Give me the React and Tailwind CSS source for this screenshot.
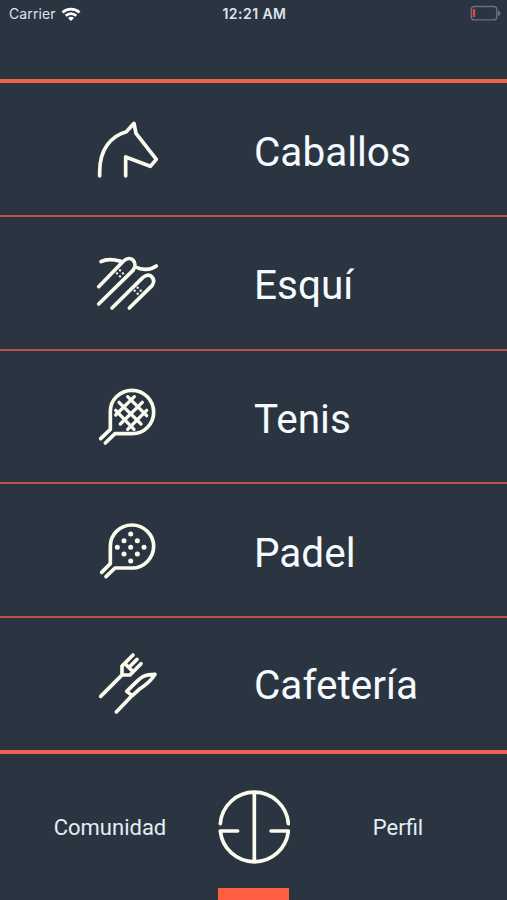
const activities = [
    {
        name: 'Caballos',
        viewBox: '0 -3 270 240',
        icon: (
            <path
                strokeWidth="11"
                d="M44 198V184C44 118 78 78 124 65L147 40L153 70L214 148L196 169L122 141V198"
            />
        ),
    },
    {
        name: 'Esquí',
        viewBox: '0 -6 270 240',
        icon: (
            <>
                <path
                    strokeWidth="11"
                    d="M48 50C70 38 96 46 108 49M152 66C170 76 195 76 214 63M41 125L115 49C137 27 161 52 144 76L41 177M81 189L174 97C196 80 214 102 201 122L133 189"
                />
                <path
                    strokeWidth="7"
                    d="M96 85h.1M105 76h.1M114 85h.1M105 94h.1M149 137h.1M158 128h.1M167 137h.1M158 146h.1"
                />
            </>
        ),
    },
    {
        name: 'Tenis',
        viewBox: '0 -6 270 240',
        icon: (
            <>
                <path
                    strokeWidth="11"
                    d="M47 182L76 154V100C76 65 105 37 141 37S206 67 206 103S177 167 142 167H90L61 195"
                />
                <path
                    strokeWidth="10"
                    d="M128 56L185 113M102 73L168 138M92 97L147 154M148 56L92 111M172 73L106 138M185 97L128 154"
                />
            </>
        ),
    },
    {
        name: 'Padel',
        viewBox: '0 0 270 240',
        icon: (
            <>
                <path
                    strokeWidth="11"
                    d="M50 187L76 161V108C76 73 105 45 141 45S206 75 206 109S177 174 142 174H90L63 200"
                />
                <path
                    strokeWidth="15"
                    d="M137 72h.1M117 92h.1M157 92h.1M97 112h.1M137 112h.1M177 112h.1M117 132h.1M157 132h.1M137 153h.1"
                />
            </>
        ),
    },
    {
        name: 'Cafetería',
        viewBox: '0 3 270 240',
        icon: (
            <path
                strokeWidth="11"
                d="M47 160L112 95M144 36L111 69V92L115 96H135L168 62M156 49L136 69M121 63L142 84M94 207L137 162M210 94C178 94 168 103 155 116L125 145L142 158L165 137C185 124 198 114 210 94"
            />
        ),
    },
];

function StatusBar() {
    return (
        <header className="grid h-[79px] grid-cols-3 items-start pt-[5px] pr-[6px] pl-[8px] text-[14px] leading-[18px] text-[#dce5eb]">
            <div className="flex items-center gap-[5px] pl-px">
                <span className="font-[Inter,sans-serif] tracking-[0.1px]">Carrier</span>
                <svg className="h-[15px] w-[20px]" viewBox="0 0 20 15" fill="none" stroke="#fff" strokeWidth="2.7">
                    <path d="M1.5 5.4C6.2.9 13.8.9 18.5 5.4M4.7 8.7C7.7 5.8 12.3 5.8 15.3 8.7" />
                    <path d="M10 14L7 11C8.7 9.4 11.3 9.4 13 11Z" fill="#fff" stroke="none" />
                </svg>
            </div>
            <span className="text-center font-[Inter,sans-serif] font-semibold tracking-[0.45px]">12:21 AM</span>
            <svg className="h-[16px] w-[32px] justify-self-end" viewBox="0 0 32 16" fill="none">
                <rect x="2.3" y="1.5" width="25.5" height="13.4" rx="3" stroke="#69737e" strokeWidth="1.4" />
                <path d="M29 5.5C32.3 7 32.3 9.4 29 11Z" fill="#69737e" />
                <path d="M5 4.2V12" stroke="#e8473f" strokeWidth="2.4" />
            </svg>
        </header>
    );
}

function ActivityRow({ activity }) {
    return (
        <li className="group flex h-[133.75px] items-center border-b-2 border-[#b95549] pl-[85px] last:h-[132px] last:border-b-0">
            <svg
                className="h-20 w-[90px] shrink-0"
                viewBox={activity.viewBox}
                fill="none"
                stroke="#fbfbed"
                strokeLinecap="round"
                strokeLinejoin="round"
            >
                {activity.icon}
            </svg>
            <span className="ml-[79px] pt-[6px] text-[40.5px] leading-none text-[#f5faff] group-last:pt-[3px]">
                {activity.name}
            </span>
        </li>
    );
}

export default function App() {
    return (
        <div className="flex h-[900px] w-[507px] flex-col overflow-hidden bg-[#2b3541] font-[Roboto,sans-serif]">
            <StatusBar />
            <ul className="h-[675px] border-y-4 border-[#f0634b]">
                {activities.map((activity) => (
                    <ActivityRow key={activity.name} activity={activity} />
                ))}
            </ul>
            <nav className="grid flex-1 grid-cols-[218px_71px_218px] text-[22px] leading-none text-[#e5edf5]">
                <span className="mt-[63px] pl-[2px] text-center">Comunidad</span>
                <div className="flex flex-col items-center justify-between">
                    <svg
                        className="mt-[36px] h-[74px] w-[72px]"
                        viewBox="-1 0 216 222"
                        fill="none"
                        stroke="#fbfbed"
                        strokeWidth="11"
                        strokeLinecap="round"
                    >
                        <path d="M6 101A102.3 102.3 0 0 1 210 101M6 123A102.5 102.5 0 0 0 210 123M6 123H58M210 123H158M108 7V215" />
                    </svg>
                    <div className="h-3 w-[71px] bg-[#ff5e43]" />
                </div>
                <span className="mt-[63px] text-center">Perfil</span>
            </nav>
        </div>
    );
}
